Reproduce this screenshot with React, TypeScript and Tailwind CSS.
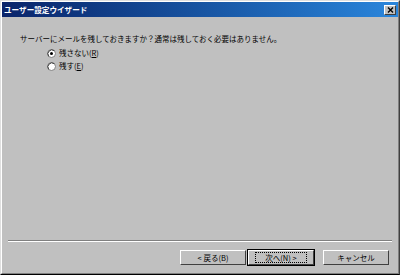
const jp = { fontFamily: '"Noto Sans CJK JP", "Noto Sans", sans-serif' };

function Radio({ checked }: { checked?: boolean }) {
  return (
    <svg width="9" height="9" viewBox="0 0 9 9" aria-hidden>
      <circle cx="4.5" cy="4.5" r="4" fill="#fff" stroke="#808080" strokeWidth="1" />
      <path d="M1.7 7.3A4 4 0 0 1 7.3 1.7" fill="none" stroke="#404040" strokeWidth="1" />
      {checked ? <circle cx="4.5" cy="4.5" r="1.5" fill="#000" /> : null}
    </svg>
  );
}

function Button({ label, isDefault }: { label: string; isDefault?: boolean }) {
  return (
    <div className={isDefault ? "border border-black" : "border border-transparent"}>
      <div className="flex h-[15px] w-[66px] items-center justify-center border border-t-white border-l-white border-r-[#404040] border-b-[#404040] bg-[#c0c0c0] text-[7.5px] text-black">
        <span className={isDefault ? "border border-dotted border-black px-[9px] leading-[9px]" : "leading-[9px]"}>{label}</span>
      </div>
    </div>
  );
}

export default function App() {
  return (
    <div style={jp} className="flex h-[275px] w-[400px] flex-col border border-t-[#dfdfdf] border-l-[#dfdfdf] border-r-[#404040] border-b-black bg-[#c0c0c0]">
      <div className="flex flex-1 flex-col border border-t-white border-l-white border-r-[#808080] border-b-[#808080]">
        <div className="mx-[0px] flex h-[15px] items-center justify-between bg-gradient-to-r from-[#0a246a] to-[#2a86dc] pl-[2px] pr-[2px]">
          <span className="text-[7.6px] font-bold leading-none text-white">ユーザー設定ウイザード</span>
          <div className="flex h-[10px] w-[12px] items-center justify-center border border-t-white border-l-white border-r-[#404040] border-b-[#404040] bg-[#c0c0c0]">
            <svg width="7" height="6" viewBox="0 0 7 6" aria-hidden>
              <path d="M1 0.5l5 5M6 0.5l-5 5" stroke="#000" strokeWidth="1.4" />
            </svg>
          </div>
        </div>

        <div className="flex flex-1 flex-col">
          <div className="pl-[18px] pt-[17px] text-[7.5px] leading-[10px] text-black">
            サーバーにメールを残しておきますか？通常は残しておく必要はありません。
          </div>
          <div className="mt-[4px] flex flex-col gap-[3px] pl-[45px] text-[7.5px] leading-[10px] text-black">
            <div className="flex items-center gap-[3px]">
              <Radio checked />
              <span>残さない(<u>R</u>)</span>
            </div>
            <div className="flex items-center gap-[3px]">
              <Radio />
              <span>残す(<u>E</u>)</span>
            </div>
          </div>

          <div className="flex-1" />

          <div className="mx-[6px] border-t border-b border-t-[#808080] border-b-white" />
          <div className="flex justify-end gap-[7px] pr-[8px] pt-[7px] pb-[7px]">
            <div className="flex">
              <Button label="< 戻る(B)" />
              <Button label="次へ(N) >" isDefault />
            </div>
            <Button label="キャンセル" />
          </div>
        </div>
      </div>
    </div>
  );
}
